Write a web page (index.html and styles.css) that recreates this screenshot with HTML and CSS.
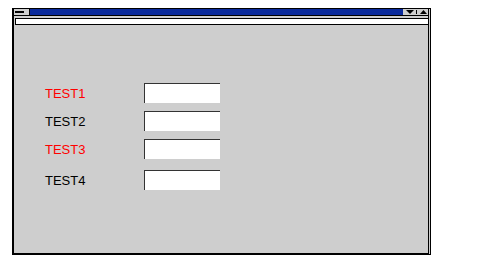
FILE: index.html
```html
<!DOCTYPE html>
<html lang="en">

<head>
  <meta charset="UTF-8" />
  <title>Test Form</title>
  <link rel="stylesheet" href="styles.css">
</head>

<body>

  <div class="janela">
    <div class="barra-titulo">
      <div class="menu-sistema"><span class="traco"></span></div>
      <div class="titulo"></div>
      <div class="botoes">
        <svg width="25" height="6" viewBox="0 0 25 6">
          <polygon points="3,1 11,1 7,5" fill="#000" />
          <rect x="13" y="1" width="1" height="4" fill="#000" />
          <polygon points="17,5 24,5 20.5,1" fill="#000" />
        </svg>
      </div>
    </div>

    <div class="barra-menu"></div>

    <div class="conteudo">
      <div class="linha">
        <label class="rotulo vermelho">TEST1</label>
        <input type="text" class="campo" />
      </div>
      <div class="linha">
        <label class="rotulo">TEST2</label>
        <input type="text" class="campo" />
      </div>
      <div class="linha">
        <label class="rotulo vermelho">TEST3</label>
        <input type="text" class="campo" />
      </div>
      <div class="linha ultima">
        <label class="rotulo">TEST4</label>
        <input type="text" class="campo" />
      </div>
    </div>
  </div>

</body>

</html>
```

FILE: styles.css
```css
:root {
  --cinza: #cecece;
  --azul: #0a2a9c;
  --borda: #000;
}

body {
  margin: 0;
  background-color: white;
  font-family: 'Liberation Sans', Arial, sans-serif;
}

.janela {
  margin: 8px 0 0 12px;
  width: 414px;
  height: 244px;
  background-color: var(--cinza);
  border-top: 1px solid var(--borda);
  border-left: 2px solid var(--borda);
  border-bottom: 2px solid var(--borda);
  border-right: 3px double var(--borda);
  display: flex;
  flex-direction: column;
}

/* Barra de titulo */
.barra-titulo {
  display: flex;
  height: 6px;
  border-bottom: 1px solid var(--borda);
}

.menu-sistema {
  width: 15px;
  border-right: 1px solid var(--borda);
  position: relative;
}

.traco {
  position: absolute;
  left: 1px;
  top: 2px;
  width: 9px;
  height: 2px;
  background-color: var(--borda);
}

.titulo {
  flex: 1;
  background-color: var(--azul);
}

.botoes {
  width: 25px;
  display: flex;
}

/* Barra de menu */
.barra-menu {
  margin: 2px 0 0 1px;
  height: 5px;
  background-color: white;
  border: 1px solid var(--borda);
  border-right: none;
}

/* Formulario */
.conteudo {
  padding: 58px 0 0 31px;
  display: flex;
  flex-direction: column;
  gap: 8px;
}

.linha {
  display: flex;
  align-items: center;
  height: 20px;
}

.linha.ultima {
  margin-top: 3px;
}

.rotulo {
  width: 99px;
  font-size: 13px;
  color: #000;
}

.rotulo.vermelho {
  color: #ff0000;
}

.campo {
  box-sizing: border-box;
  width: 76px;
  height: 20px;
  margin: 0;
  padding: 0;
  background-color: white;
  border: none;
  border-top: 1px solid #333;
  border-left: 1px solid #333;
  outline: none;
}
```
